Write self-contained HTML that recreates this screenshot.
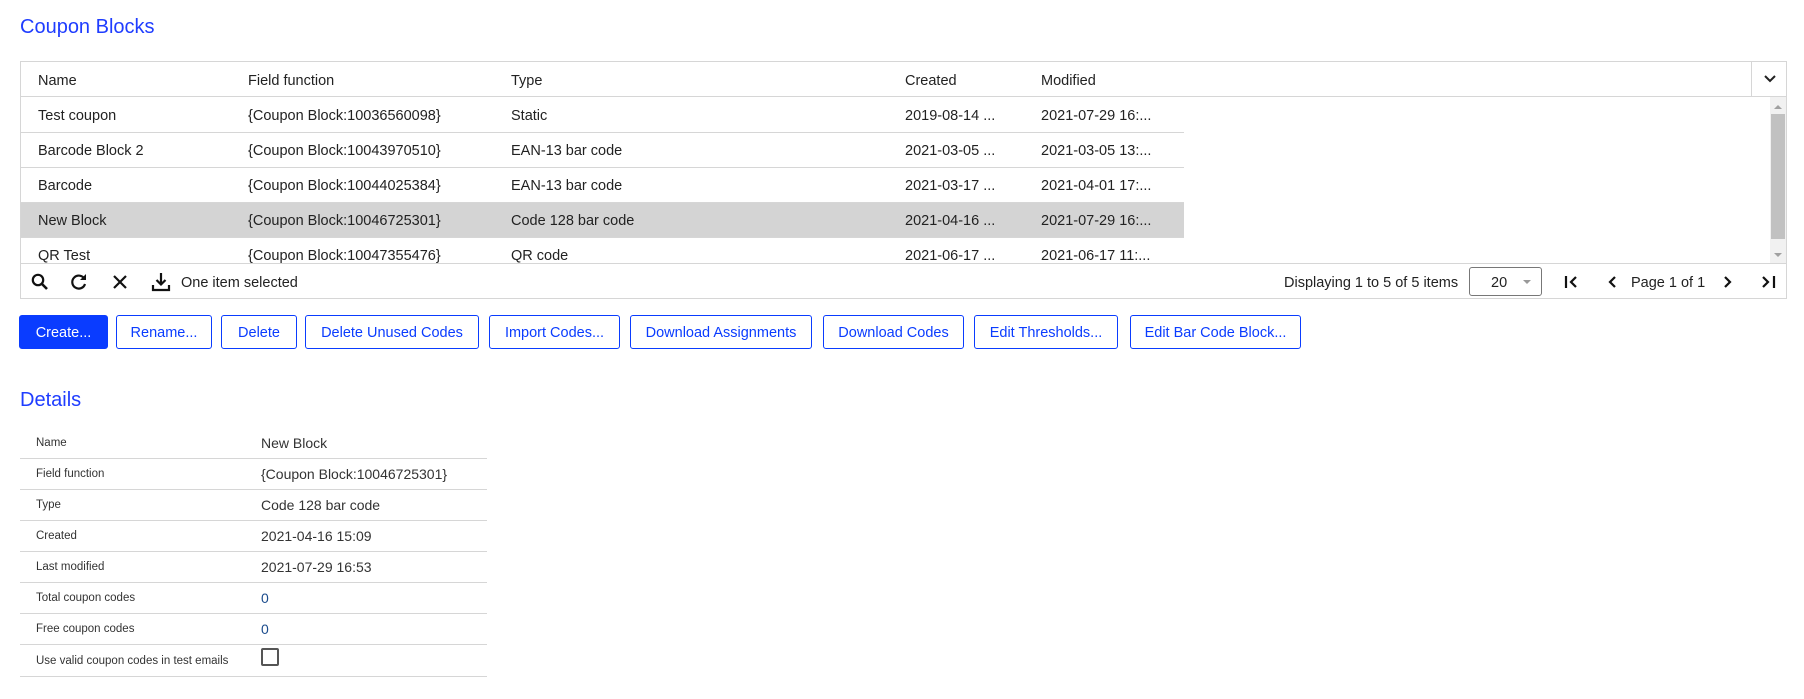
<!DOCTYPE html>
<html><head><meta charset="utf-8"><style>
*{box-sizing:border-box;margin:0;padding:0}
body{width:1804px;height:699px;background:#fff;font-family:"Liberation Sans",Arial,sans-serif;color:#222;position:relative;overflow:hidden;font-size:14.5px}
.abs{position:absolute;white-space:nowrap}
h1,h2{position:absolute;font-weight:normal;color:#1f3dff;font-size:20px;left:20px}
.grid{position:absolute;left:20px;top:61px;width:1767px;height:238px;border:1px solid #d6d6d6}
.hl{position:absolute;height:1px;background:#d6d6d6}
.cell{position:absolute;white-space:nowrap;line-height:34px;height:34px}
.btn{position:absolute;top:315px;height:34px;border:1.5px solid #0a3cff;border-radius:3px;color:#0a3cff;font-size:14.5px;line-height:34px;text-align:center;background:#fff}
.lbl{position:absolute;left:36px;font-size:11.5px;color:#333;white-space:nowrap}
.val{position:absolute;left:261px;font-size:14px;color:#333;white-space:nowrap}
</style></head><body>
<h1 style="top:16px">Coupon Blocks</h1>
<div class="grid"></div>
<div class="hl" style="left:20px;top:96px;width:1767px"></div>
<div class="abs" style="left:1751px;top:61px;width:1px;height:36px;background:#d6d6d6"></div>
<svg class="abs" style="left:1762px;top:72px" width="16" height="14" viewBox="0 0 16 14"><path d="M3 4l5 5 5-5" fill="none" stroke="#222" stroke-width="2"/></svg>
<div class="cell" style="left:38px;top:64px">Name</div>
<div class="cell" style="left:248px;top:64px">Field function</div>
<div class="cell" style="left:511px;top:64px">Type</div>
<div class="cell" style="left:905px;top:64px">Created</div>
<div class="cell" style="left:1041px;top:64px">Modified</div>
<div class="abs" style="left:21px;top:202px;width:1163px;height:35px;background:#d4d4d4"></div>
<div class="hl" style="left:21px;top:132px;width:1163px"></div>
<div class="hl" style="left:21px;top:167px;width:1163px"></div>
<div class="hl" style="left:21px;top:202px;width:1163px"></div>
<div class="hl" style="left:21px;top:237px;width:1163px"></div>
<div class="cell" style="left:38px;top:99px">Test coupon</div><div class="cell" style="left:248px;top:99px">{Coupon Block:10036560098}</div><div class="cell" style="left:511px;top:99px">Static</div><div class="cell" style="left:905px;top:99px">2019-08-14 ...</div><div class="cell" style="left:1041px;top:99px">2021-07-29 16:...</div>
<div class="cell" style="left:38px;top:134px">Barcode Block 2</div><div class="cell" style="left:248px;top:134px">{Coupon Block:10043970510}</div><div class="cell" style="left:511px;top:134px">EAN-13 bar code</div><div class="cell" style="left:905px;top:134px">2021-03-05 ...</div><div class="cell" style="left:1041px;top:134px">2021-03-05 13:...</div>
<div class="cell" style="left:38px;top:169px">Barcode</div><div class="cell" style="left:248px;top:169px">{Coupon Block:10044025384}</div><div class="cell" style="left:511px;top:169px">EAN-13 bar code</div><div class="cell" style="left:905px;top:169px">2021-03-17 ...</div><div class="cell" style="left:1041px;top:169px">2021-04-01 17:...</div>
<div class="cell" style="left:38px;top:204px">New Block</div><div class="cell" style="left:248px;top:204px">{Coupon Block:10046725301}</div><div class="cell" style="left:511px;top:204px">Code 128 bar code</div><div class="cell" style="left:905px;top:204px">2021-04-16 ...</div><div class="cell" style="left:1041px;top:204px">2021-07-29 16:...</div>
<div class="cell" style="left:38px;top:239px;height:24px;overflow:hidden">QR Test</div><div class="cell" style="left:248px;top:239px;height:24px;overflow:hidden">{Coupon Block:10047355476}</div><div class="cell" style="left:511px;top:239px;height:24px;overflow:hidden">QR code</div><div class="cell" style="left:905px;top:239px;height:24px;overflow:hidden">2021-06-17 ...</div><div class="cell" style="left:1041px;top:239px;height:24px;overflow:hidden">2021-06-17 11:...</div>
<div class="abs" style="left:1770px;top:97px;width:16px;height:166px;background:#f1f1f1"></div>
<div class="abs" style="left:1771px;top:114px;width:14px;height:125px;background:#c1c1c1"></div>
<svg class="abs" style="left:1773px;top:104px" width="10" height="6"><path d="M1 5h8L5 1z" fill="#a0a0a0"/></svg>
<svg class="abs" style="left:1773px;top:252px" width="10" height="6"><path d="M1 1h8L5 5z" fill="#a0a0a0"/></svg>
<div class="hl" style="left:20px;top:263px;width:1767px"></div>
<svg class="abs" style="left:30px;top:272px" width="20" height="20" viewBox="0 0 20 20"><circle cx="8" cy="8" r="5.2" fill="none" stroke="#111" stroke-width="2.2"/><path d="M12 12l5 5" stroke="#111" stroke-width="2.6"/></svg>
<svg class="abs" style="left:69px;top:272px" width="20" height="20" viewBox="0 0 20 20"><path d="M15.5 7A6.5 6.5 0 1 0 16 12" fill="none" stroke="#111" stroke-width="2.2"/><path d="M17 2v6h-6z" fill="#111"/></svg>
<svg class="abs" style="left:110px;top:272px" width="20" height="20" viewBox="0 0 20 20"><path d="M4 4l12 12M16 4L4 16" stroke="#111" stroke-width="2.2"/></svg>
<svg class="abs" style="left:150px;top:271px" width="22" height="22" viewBox="0 0 22 22"><path d="M11 2v11M6.5 9l4.5 4.5L15.5 9" fill="none" stroke="#111" stroke-width="2.2"/><path d="M3 14v5h16v-5" fill="none" stroke="#111" stroke-width="2.2"/></svg>
<div class="abs" style="left:181px;top:275px;font-size:14.5px">One item selected</div>
<div class="abs" style="left:1284px;top:275px;font-size:14.5px">Displaying 1 to 5 of 5 items</div>
<div class="abs" style="left:1469px;top:267px;width:73px;height:29px;border:1px solid #777;border-radius:3px"></div>
<div class="abs" style="left:1491px;top:275px;font-size:14.5px">20</div>
<svg class="abs" style="left:1522px;top:279px" width="10" height="6"><path d="M1 1h8L5 5z" fill="#999"/></svg>
<svg class="abs" style="left:1562px;top:272px" width="20" height="20" viewBox="0 0 20 20"><path d="M4 4v12" stroke="#111" stroke-width="2.2"/><path d="M14 5l-5 5 5 5" fill="none" stroke="#111" stroke-width="2.2"/></svg>
<svg class="abs" style="left:1602px;top:272px" width="20" height="20" viewBox="0 0 20 20"><path d="M13 5l-5 5 5 5" fill="none" stroke="#111" stroke-width="2.2"/></svg>
<div class="abs" style="left:1631px;top:275px;font-size:14.5px">Page 1 of 1</div>
<svg class="abs" style="left:1718px;top:272px" width="20" height="20" viewBox="0 0 20 20"><path d="M7 5l5 5-5 5" fill="none" stroke="#111" stroke-width="2.2"/></svg>
<svg class="abs" style="left:1759px;top:272px" width="20" height="20" viewBox="0 0 20 20"><path d="M4 5l5 5-5 5" fill="none" stroke="#111" stroke-width="2.2"/><path d="M15 4v12" stroke="#111" stroke-width="2.2"/></svg>
<div class="btn" style="left:19px;width:89px;background:#0a3cff;color:#fff">Create...</div>
<div class="btn" style="left:116px;width:96px">Rename...</div>
<div class="btn" style="left:221px;width:76px">Delete</div>
<div class="btn" style="left:305px;width:174px">Delete Unused Codes</div>
<div class="btn" style="left:489px;width:131px">Import Codes...</div>
<div class="btn" style="left:630px;width:182px">Download Assignments</div>
<div class="btn" style="left:823px;width:141px">Download Codes</div>
<div class="btn" style="left:974px;width:144px">Edit Thresholds...</div>
<div class="btn" style="left:1130px;width:171px">Edit Bar Code Block...</div>
<h2 style="top:389px">Details</h2>
<div class="lbl" style="top:437px">Name</div><div class="val" style="top:435px">New Block</div>
<div class="lbl" style="top:468px">Field function</div><div class="val" style="top:466px">{Coupon Block:10046725301}</div>
<div class="lbl" style="top:499px">Type</div><div class="val" style="top:497px">Code 128 bar code</div>
<div class="lbl" style="top:530px">Created</div><div class="val" style="top:528px">2021-04-16 15:09</div>
<div class="lbl" style="top:561px">Last modified</div><div class="val" style="top:559px">2021-07-29 16:53</div>
<div class="lbl" style="top:592px">Total coupon codes</div><div class="val" style="top:590px;color:#1a4b8c">0</div>
<div class="lbl" style="top:623px">Free coupon codes</div><div class="val" style="top:621px;color:#1a4b8c">0</div>
<div class="lbl" style="top:655px">Use valid coupon codes in test emails</div>
<div class="abs" style="left:261px;top:648px;width:18px;height:18px;border:2px solid #555;border-radius:2px"></div>
<div class="hl" style="left:20px;top:458px;width:467px"></div>
<div class="hl" style="left:20px;top:489px;width:467px"></div>
<div class="hl" style="left:20px;top:520px;width:467px"></div>
<div class="hl" style="left:20px;top:551px;width:467px"></div>
<div class="hl" style="left:20px;top:582px;width:467px"></div>
<div class="hl" style="left:20px;top:613px;width:467px"></div>
<div class="hl" style="left:20px;top:644px;width:467px"></div>
<div class="hl" style="left:20px;top:676px;width:467px"></div>
</body></html>
